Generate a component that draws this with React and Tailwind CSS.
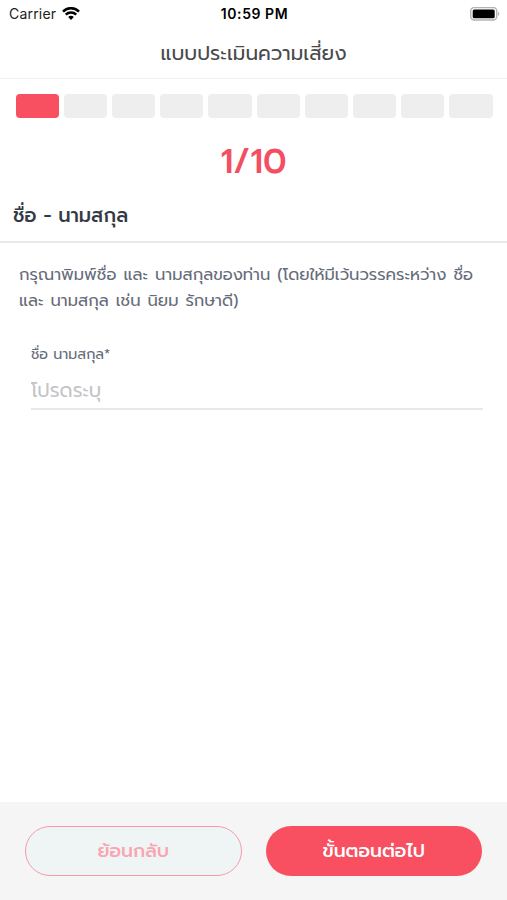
const TOTAL_STEPS = 10;

function WifiIcon() {
  return (
    <svg width="18" height="14" viewBox="0 0 18 14" fill="none" stroke="#000" strokeWidth="2.5">
      <path d="M1 4.6C5.4.1 12.6.1 17 4.6" />
      <path d="M3.8 7.7c2.8-2.8 7.6-2.8 10.4 0" />
      <path d="M6.2 9.9c1.5-1.4 4.1-1.4 5.6 0L9 12.9z" fill="#000" stroke="none" />
    </svg>
  );
}

function BatteryIcon() {
  return (
    <svg width="30" height="14" viewBox="0 0 30 14">
      <rect x="0.75" y="0.5" width="26" height="12.5" rx="3.5" fill="#fff" stroke="#b3b3b3" strokeWidth="1.4" />
      <rect x="2.7" y="2.4" width="22" height="8.8" rx="1.5" fill="#000" />
      <path d="M28.2 4.6c1.5.7 1.5 3.7 0 4.4z" fill="#a9a9a9" />
    </svg>
  );
}

function StatusBar() {
  return (
    <div className="grid h-[27px] grid-cols-3 items-center pl-[9px] pr-[7px] font-['Inter','Liberation_Sans',sans-serif] text-[14px] text-black">
      <div className="flex items-center gap-[6px]">
        <span className="tracking-[0.2px] text-[#222]">Carrier</span>
        <WifiIcon />
      </div>
      <span className="text-center font-semibold tracking-[0.55px]">10:59 PM</span>
      <div className="flex justify-end">
        <BatteryIcon />
      </div>
    </div>
  );
}

export default function App() {
  const step = 1;

  return (
    <div className="flex h-[900px] w-[507px] flex-col overflow-hidden bg-white font-['Prompt','Kanit','Noto_Sans_Thai','Noto_Sans',sans-serif]">
      <StatusBar />

      {/* Header */}
      <header className="flex h-[52px] items-center justify-center border-b border-[#f3f3f3]">
        <h1 className="whitespace-nowrap text-[20px] text-[#4a4a4a]">แบบประเมินความเสี่ยง</h1>
      </header>

      {/* Progress */}
      <div className="flex gap-[5px] pl-[15.5px] pr-[14.5px] pt-[15px]">
        {Array.from({ length: TOTAL_STEPS }, (_, i) => (
          <div key={i} className={`h-[24px] flex-1 rounded-[4px] ${i < step ? 'bg-[#f84f61]' : 'bg-[#eeeeee]'}`} />
        ))}
      </div>
      <div className="mt-[20px] h-[48px] text-center text-[34.5px] font-medium leading-[48px] text-[#f34e61]">
        {step}/{TOTAL_STEPS}
      </div>

      <h2 className="flex h-[57px] items-center border-b-2 border-[#e9e9e9] pl-[13px] pt-[5px] text-[19.4px] font-medium text-[#343a43]">
        ชื่อ - นามสกุล
      </h2>

      {/* Form */}
      <div className="flex-1 pt-[19px]">
        <p className="whitespace-nowrap pl-[19px] text-[16.4px] leading-[26px] text-[#666b7b] [word-spacing:1px]">
          กรุณาพิมพ์ชื่อ และ นามสกุลของท่าน (โดยให้มีเว้นวรรคระหว่าง ชื่อ
          <br />
          และ นามสกุล เช่น นิยม รักษาดี)
        </p>
        <div className="ml-[31px] mr-[24px] mt-[28px]">
          <label htmlFor="name" className="block h-[24px] text-[14.3px] leading-[24px] text-[#666b7b]">
            ชื่อ นามสกุล*
          </label>
          <input
            id="name"
            placeholder="โปรดระบุ"
            className="mt-[6px] block h-[38px] w-full border-b-2 border-[#e8e8e8] text-[19.3px] outline-none placeholder:text-[#c4c4c8]"
          />
        </div>
      </div>

      {/* Footer */}
      <footer className="flex h-[98px] gap-[24px] bg-[#f5f5f5] px-[25px] pt-[24px]">
        <button className="h-[50px] w-[217px] rounded-full border border-[#f799a8] bg-[#eff5f5] text-[18.8px] font-medium text-[#f9a5b2]">
          ย้อนกลับ
        </button>
        <button className="h-[50px] w-[217px] rounded-full bg-[#f84f61] text-[18.8px] font-medium text-white">
          ขั้นตอนต่อไป
        </button>
      </footer>
    </div>
  );
}
